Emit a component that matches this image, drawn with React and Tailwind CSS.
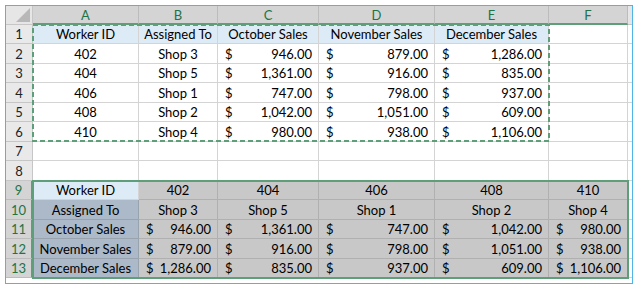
import React from 'react';

const COLS = [106, 79, 101, 116, 114, 79];
const LETTERS = ['A', 'B', 'C', 'D', 'E', 'F'];
const HEIGHTS = [19, 20, 19, 20, 19, 20, 19, 20, 19, 20, 19, 20, 19];

const GREEN = 'text-[#217346]';

const top = [
  ['402', 'Shop 3', '946.00', '879.00', '1,286.00'],
  ['404', 'Shop 5', '1,361.00', '916.00', '835.00'],
  ['406', 'Shop 1', '747.00', '798.00', '937.00'],
  ['408', 'Shop 2', '1,042.00', '1,051.00', '609.00'],
  ['410', 'Shop 4', '980.00', '938.00', '1,106.00'],
];

const c = (v, bg) => ({ t: 'c', v, bg });
const m = (v, bg) => ({ t: '$', v, bg });
const empty = (bg) => ({ t: 'c', v: '', bg });

function buildRows() {
  const rows = [];
  rows.push(
    ['Worker ID', 'Assigned To', 'October Sales', 'November Sales', 'December Sales']
      .map((v) => c(v, 'hdr'))
      .concat([empty('w')])
  );
  top.forEach((r) => {
    rows.push([c(r[0], 'w'), c(r[1], 'w'), m(r[2], 'w'), m(r[3], 'w'), m(r[4], 'w'), empty('w')]);
  });
  rows.push(COLS.map(() => empty('w')));
  rows.push(COLS.map(() => empty('w')));
  // transposed table, selected
  rows.push([c('Worker ID', 'hdr')].concat(top.map((r) => c(r[0], 'sel'))));
  rows.push([c('Assigned To', 'lab')].concat(top.map((r) => c(r[1], 'sel'))));
  rows.push([c('October Sales', 'lab')].concat(top.map((r) => m(r[2], 'sel'))));
  rows.push([c('November Sales', 'lab')].concat(top.map((r) => m(r[3], 'sel'))));
  rows.push([c('December Sales', 'lab')].concat(top.map((r) => m(r[4], 'sel'))));
  return rows;
}

const BG = {
  w: 'bg-white border-[#d4d4d4]',
  hdr: 'bg-[#ddebf7] border-[#d4d4d4]',
  sel: 'bg-[#c8c8c8] border-[#b0b0b0]',
  lab: 'bg-[#acb9c9] border-[#98a3ae]',
};

function Cell({ cell, width }) {
  const base = `flex items-center pt-px border-r border-b text-[13px] leading-[15px] text-black ${BG[cell.bg]}`;
  if (cell.t === '$') {
    return (
      <div className={`${base} justify-between pl-[7px] pr-[6px]`} style={{ width }}>
        <span>$</span>
        <span>{cell.v}</span>
      </div>
    );
  }
  return (
    <div className={`${base} justify-center whitespace-nowrap`} style={{ width }}>
      {cell.v}
    </div>
  );
}

export default function App() {
  const rows = buildRows();
  return (
    <div className="w-[640px] h-[290px] bg-white pl-[5px] pt-[5px]" style={{ fontFamily: 'Lato, "Liberation Sans", sans-serif' }}>
      <div className="w-[628px] h-[279px] border border-[#4fb4e6] overflow-hidden">
        <div className="relative">
          {/* column headers */}
          <div className="flex h-[19px]">
            <div className="w-[27px] bg-[#e6e6e6] border-r border-b border-[#c6c6c6] flex items-end justify-end pr-[2px] pb-[2px]">
              <svg width="14" height="14" viewBox="0 0 14 14">
                <polygon points="14,0 14,14 0,14" fill="#b8b8b8" />
              </svg>
            </div>
            {LETTERS.map((l, i) => (
              <div
                key={l}
                className={`flex items-center justify-center pt-px bg-[#d4d4d4] border-r border-[#bcbcbc] border-b-2 border-b-[#5e9f7a] text-[13px] leading-[15px] ${GREEN}`}
                style={{ width: COLS[i] }}
              >
                {l}
              </div>
            ))}
            <div className="w-[4px] bg-[#e6e6e6] border-b border-[#c6c6c6]" />
          </div>

          {rows.map((row, r) => {
            const selRow = r >= 8;
            return (
              <div key={r} className="flex" style={{ height: HEIGHTS[r] }}>
                <div
                  className={`w-[27px] flex items-center justify-center pt-px border-b text-[13px] leading-[15px] ${
                    selRow
                      ? `bg-[#d4d4d4] border-[#bcbcbc] border-r-2 border-r-[#5e9f7a] ${GREEN}`
                      : 'bg-[#e9e9e9] border-[#c6c6c6] border-r text-[#222]'
                  }`}
                >
                  {r + 1}
                </div>
                {row.map((cell, i) => (
                  <Cell key={i} cell={cell} width={COLS[i]} />
                ))}
                <div className="w-[4px] bg-white border-b border-[#d4d4d4]" />
              </div>
            );
          })}

          {/* copy marquee around A1:E6 */}
          <svg className="absolute left-[26px] top-[18px] pointer-events-none" width="518" height="118">
            <rect x="1" y="1" width="516" height="116" fill="none" stroke="#5e9f7a" strokeWidth="2" strokeDasharray="5 3" />
          </svg>

          {/* selection A9:F13 */}
          <div className="absolute left-[26px] top-[174px] w-[597px] h-[99px] border-2 border-[#5e9f7a] pointer-events-none" />
        </div>
      </div>
    </div>
  );
}
